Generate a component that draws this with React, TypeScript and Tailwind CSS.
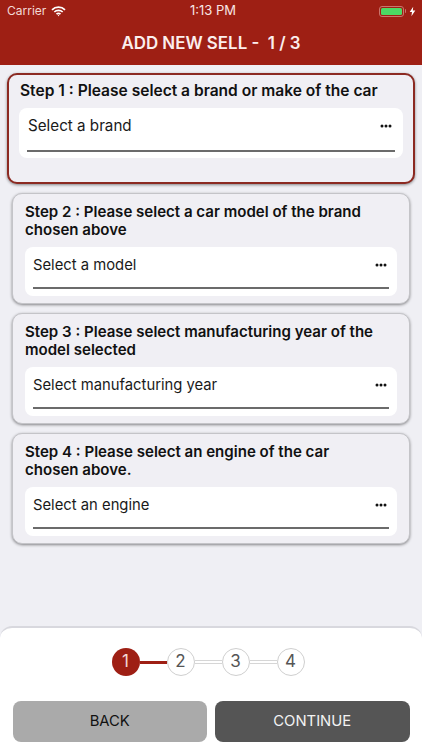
import React from 'react';

const font = { fontFamily: 'Inter, sans-serif' };

const StepCard = ({ title, placeholder, active }: { title: string; placeholder: string; active?: boolean }) => (
  <div
    className={
      active
        ? 'mx-[7px] h-[111px] rounded-[10px] border-2 border-[#8c2a22] bg-[#f0eff4] px-[10px] pt-[7px] shadow-[0_1px_3px_rgba(0,0,0,0.45)]'
        : 'mx-[12px] h-[111px] rounded-[10px] border border-[#c4c4c8] bg-[#f0eff4] px-[12px] pt-[9px] shadow-[0_1px_3px_rgba(0,0,0,0.45)]'
    }
  >
    <p className={active ? 'pl-[1px] text-[15.55px] font-semibold leading-[18px] text-[#111]' : 'pr-[20px] text-[15.05px] font-semibold leading-[18px] text-[#111]'}>{title}</p>
    <div className={active ? 'mt-[8px] h-[50px] rounded-[8px] bg-white px-[8px]' : 'mt-[8px] h-[49px] rounded-[8px] bg-white px-[8px]'}>
      <div className={active ? 'flex h-[44px] items-start justify-between border-b-2 border-[#6b6b6b] pt-[8px]' : 'flex h-[42px] items-start justify-between border-b-2 border-[#6b6b6b] pt-[8px]'}>
        <span className={active ? 'pl-[1px] text-[15.2px] leading-[20px] text-[#1a1a1a]' : 'text-[14.8px] leading-[20px] text-[#1a1a1a]'}>{placeholder}</span>
        <svg width="12" height="4" viewBox="0 0 12 4" className={active ? 'mr-[3px] mt-[8px]' : 'mr-[2px] mt-[8px]'} fill="#111">
          <circle cx="2" cy="2" r="1.5" />
          <circle cx="6" cy="2" r="1.5" />
          <circle cx="10" cy="2" r="1.5" />
        </svg>
      </div>
    </div>
  </div>
);

const Dot = ({ n, on }: { n: number; on?: boolean }) => (
  <div
    className={
      on
        ? 'flex h-[28px] w-[28px] items-center justify-center rounded-full bg-[#9e1f14] text-[17px] text-[#f3d9d6]'
        : 'flex h-[28px] w-[28px] items-center justify-center rounded-full border border-[#cfcfcf] bg-white text-[17px] text-[#555]'
    }
  >
    {n}
  </div>
);

const Line = ({ on }: { on?: boolean }) => (
  <div className={on ? 'h-[3px] w-[27px] bg-[#9e1f14]' : 'h-[4px] w-[27px] border-y border-[#d6d6d6] bg-white'} />
);

export default function App() {
  return (
    <div style={font} className="flex h-[750px] w-[422px] flex-col overflow-hidden bg-[#efeff4]">
      <header className="h-[65px] bg-[#9e1f14] text-white">
        <div className="flex h-[22px] items-center justify-between pl-[7px] pr-[6px]">
          <div className="flex w-[120px] items-center gap-[5px]">
            <span className="text-[12px] text-[#f3d9d6]">Carrier</span>
            <svg width="15" height="11" viewBox="0 0 15 11" fill="none" stroke="#fff" strokeWidth="1.7">
              <path d="M1 3.8a9.2 9.2 0 0 1 13 0" />
              <path d="M3.3 6a6 6 0 0 1 8.4 0" />
              <path d="M5.5 8.2a3 3 0 0 1 4 0" />
              <circle cx="7.5" cy="9.6" r="0.7" fill="#fff" stroke="none" />
            </svg>
          </div>
          <span className="pl-[3px] text-[13px] text-[#f8e6e4]">1:13 PM</span>
          <div className="flex w-[120px] items-center justify-end">
            <div className="flex h-[11px] w-[25px] items-center rounded-[3px] border border-[#c9766e] p-[1px]">
              <div className="h-full w-full rounded-[1.5px] bg-[#4cd964]" />
            </div>
            <div className="ml-[1px] h-[4px] w-[1px] rounded-r-full bg-[#c9766e]" />
            <svg width="7" height="11" viewBox="0 0 8 11" fill="#fff" className="ml-[3px]">
              <path d="M4.8 0 0.8 6.2h2.6L2.8 11 7.2 4.4H4.4z" />
            </svg>
          </div>
        </div>
        <h1 className="mt-[9px] text-center text-[16.9px] font-semibold leading-[24px] whitespace-pre text-[#fbeeed]">ADD NEW SELL -  1 / 3</h1>
      </header>

      <main className="flex flex-1 flex-col gap-[9px] pt-[8px]">
        <StepCard active title="Step 1 : Please select a brand or make of the car" placeholder="Select a brand" />
        <StepCard title="Step 2 : Please select a car model of the brand chosen above" placeholder="Select a model" />
        <StepCard title="Step 3 : Please select manufacturing year of the model selected" placeholder="Select manufacturing year" />
        <StepCard title="Step 4 : Please select an engine of the car chosen above." placeholder="Select an engine" />
      </main>

      <footer className="h-[124px] rounded-t-[12px] border-t-2 border-[#d8d8de] bg-white px-[12.5px] pt-[20px]">
        <div className="flex items-center justify-center pr-[6px]">
          <Dot n={1} on />
          <Line on />
          <Dot n={2} />
          <Line />
          <Dot n={3} />
          <Line />
          <Dot n={4} />
        </div>
        <div className="mt-[25px] flex gap-[8px]">
          <button className="h-[41px] flex-1 rounded-[8px] bg-[#aaaaaa] text-[14.8px] text-[#111]">BACK</button>
          <button className="h-[41px] flex-1 rounded-[8px] bg-[#555555] text-[14.8px] text-[#f2f2f2]">CONTINUE</button>
        </div>
      </footer>
    </div>
  );
}
